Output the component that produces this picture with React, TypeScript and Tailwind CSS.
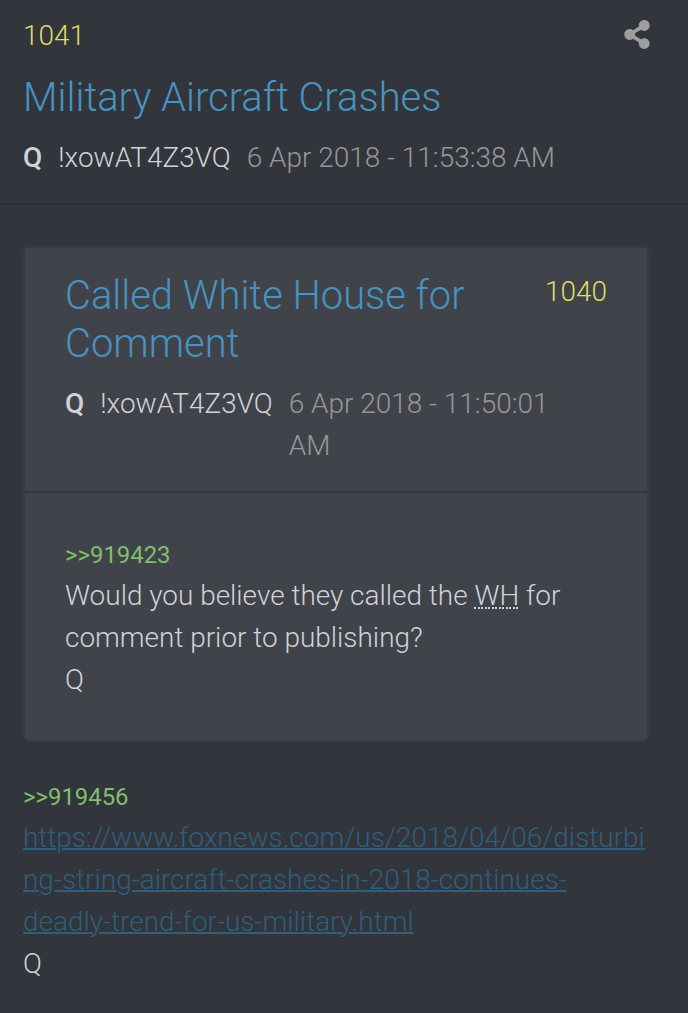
import { FaShareAlt } from 'react-icons/fa';

function Meta({ date, className }: { date: string; className: string }) {
  return (
    <div className={`flex text-[27.95px] leading-[42px] ${className}`}>
      <span className="mr-4 font-medium text-[#d0d1d9]">Q</span>
      <span className="mr-4 font-light text-[#d0d1d9]">!xowAT4Z3VQ</span>
      <span className="font-light text-[#98969a]">{date}</span>
    </div>
  );
}

function Quoted() {
  return (
    <section className="mr-[39px] ml-[23px] h-[496px] rounded-md border-2 border-[#3a3b42] bg-[#41434a]">
      <header className="h-[245px] border-b-2 border-[#36373e] px-10 pt-[24px]">
        <div className="flex items-start justify-between">
          <h2 className="w-[420px] text-[39.9px] leading-[48px] font-light text-[#4892bf]">Called White House for Comment</h2>
          <span className="-mt-px text-[27.95px] leading-[42px] font-light text-[#dfdc60]">1040</span>
        </div>
        <Meta date="6 Apr 2018 - 11:50:01 AM" className="mt-[15px] w-[490px]" />
      </header>
      <div className="px-10 pt-[41px] text-[27.95px] leading-[42px] font-light text-[#d0d1d9]">
        <p className="-mb-px text-[23.9px] leading-[42px] font-normal text-[#80bf6c]">&gt;&gt;919423</p>
        <p>
          Would you believe they called the{' '}
          <abbr className="bg-[repeating-linear-gradient(90deg,#d0d1d9_0_2px,transparent_2px_3.5px)] bg-[length:100%_2px] bg-[position:0_28px] bg-no-repeat no-underline">WH</abbr> for
          <br />
          comment prior to publishing?
        </p>
        <p>Q</p>
      </div>
    </section>
  );
}

export default function App() {
  return (
    <main className="h-[1013px] w-[688px] overflow-hidden bg-[#32353c] font-['Roboto',sans-serif]">
      <header className="h-[205px] border-b-2 border-[#2c2e35] px-[23px] pt-[15px]">
        <div className="flex justify-between">
          <span className="text-[27.95px] leading-[42px] font-light text-[#dfdc60]">1041</span>
          <FaShareAlt className="mt-[5px] mr-[15px] h-[29px] w-[26px] text-[#a09e9d]" />
        </div>
        <h1 className="mt-[17px] text-[39.9px] leading-[48px] font-light text-[#4892bf]">Military Aircraft Crashes</h1>
        <Meta date="6 Apr 2018 - 11:53:38 AM" className="mt-[15px]" />
      </header>
      <div className="pt-[41px]"><Quoted /></div>
      <div className="mt-[34px] px-[23px] text-[27.96px] leading-[42px] font-light text-[#d0d1d9]">
        <p className="-mb-px text-[23.9px] leading-[42px] font-normal text-[#80bf6c]">&gt;&gt;919456</p>
        <a className="block text-[#2f5e7b] underline decoration-2">https://www.foxnews.com/us/2018/04/06/disturbi<br />ng-string-aircraft-crashes-in-2018-continues-<br />deadly-trend-for-us-military.html</a>
        <p>Q</p>
      </div>
    </main>
  );
}
